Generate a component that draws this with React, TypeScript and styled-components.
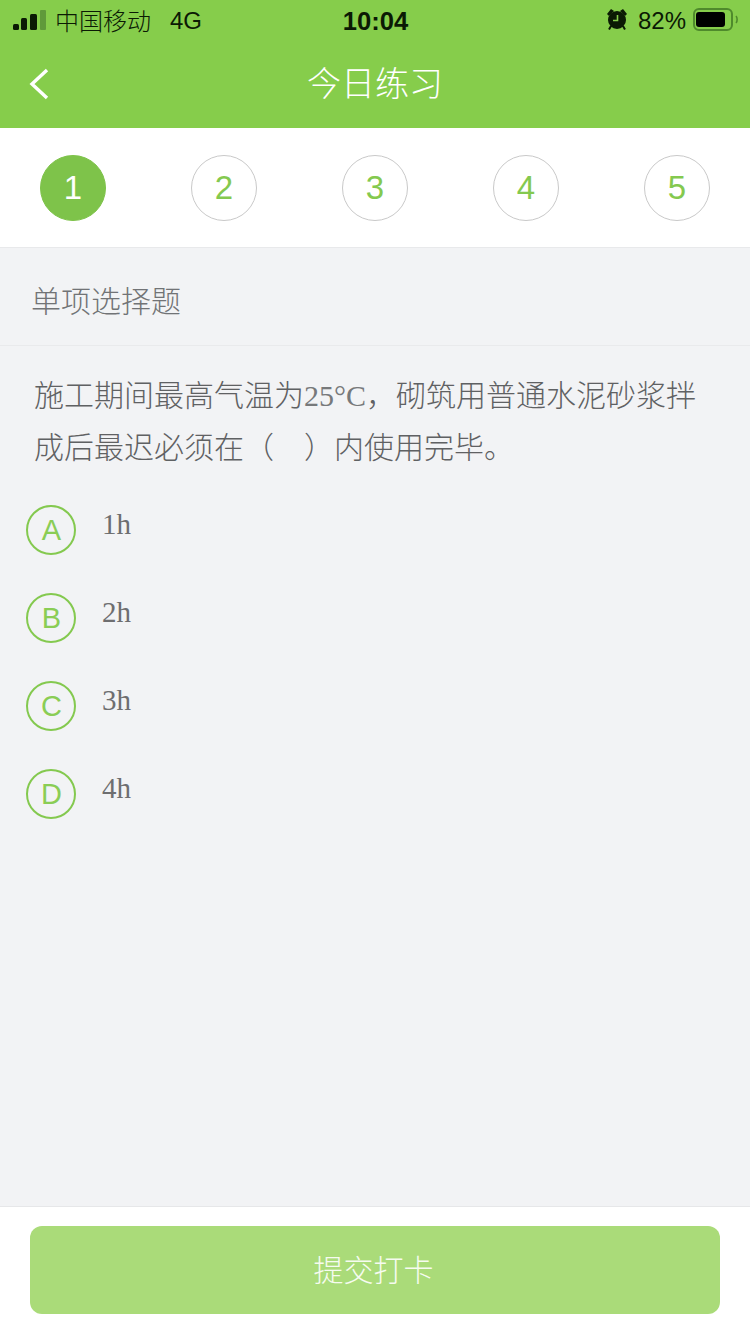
import React from 'react';
import styled, { createGlobalStyle } from 'styled-components';

const GlobalStyle = createGlobalStyle`
  html, body {
    margin: 0;
    padding: 0;
  }
  body {
    font-family: 'Noto Sans CJK SC', 'Liberation Sans', sans-serif;
  }
`;

const Page = styled.div`
  display: flex;
  flex-direction: column;
  width: 750px;
  height: 1334px;
  overflow: hidden;
  background-color: #f2f3f5;
`;

const Header = styled.header`
  display: flex;
  flex-direction: column;
  height: 128px;
  background-color: #86cd4b;
`;

const StatusBar = styled.div`
  display: flex;
  align-items: center;
  justify-content: space-between;
  height: 42px;
  padding: 0 12px 0 13px;
  color: #0b1a04;
  font-size: 24px;
`;

const StatusSide = styled.div`
  display: flex;
  align-items: center;
  width: 300px;
`;

const StatusRight = styled(StatusSide)`
  justify-content: flex-end;
`;

const Carrier = styled.span`
  margin: 0 0 2px 9px;
  line-height: 40px;
  font-weight: 300;
`;

const Network = styled.span`
  margin-left: 19px;
  font-family: 'Liberation Sans', sans-serif;
`;

const Time = styled.span`
  font-family: 'Liberation Sans', sans-serif;
  font-size: 25.6px;
  font-weight: 700;
`;

const Percent = styled.span`
  margin: 0 7px 0 10px;
  font-family: 'Liberation Sans', sans-serif;
`;

const StatusGlyph = styled.svg<{ $lift: number }>`
  margin-bottom: ${(p) => p.$lift}px;
`;

const NavBar = styled.div`
  position: relative;
  display: flex;
  align-items: center;
  justify-content: center;
  height: 86px;
  padding-bottom: 8px;
  box-sizing: border-box;
`;

const BackIcon = styled.svg`
  position: absolute;
  left: 28px;
  top: 26px;
`;

const Title = styled.h1`
  margin: 0;
  color: #fff;
  font-size: 34px;
  font-weight: 300;
`;

const Steps = styled.div`
  display: flex;
  align-items: center;
  justify-content: space-between;
  height: 119px;
  padding: 0 40px;
  background-color: #fff;
  border-bottom: 1px solid #e8e9eb;
`;

const Step = styled.div<{ $active?: boolean }>`
  display: flex;
  align-items: center;
  justify-content: center;
  box-sizing: border-box;
  width: 66px;
  height: 66px;
  border-radius: 50%;
  border: 1px solid ${(p) => (p.$active ? '#7ec34a' : '#c9c9c9')};
  background-color: ${(p) => (p.$active ? '#7ec34a' : '#fff')};
  color: ${(p) => (p.$active ? '#fff' : '#84c94f')};
  font-family: 'Liberation Sans', sans-serif;
  font-size: 33px;
`;

const SectionTitle = styled.div`
  height: 98px;
  padding-left: 31px;
  border-bottom: 1px solid #e9eaec;
  box-sizing: border-box;
  color: #717376;
  font-size: 30px;
  font-weight: 300;
  line-height: 102px;
`;

const Question = styled.p`
  margin: 0;
  padding: 21px 34px 0;
  color: #5f6163;
  font-size: 30px;
  font-weight: 300;
  line-height: 52px;
`;

const Latin = styled.span`
  font-family: 'Liberation Serif', serif;
  line-height: 1;
  color: #77797b;
`;

const Options = styled.div`
  display: flex;
  flex-direction: column;
  gap: 38px;
  padding: 34px 0 0 26px;
`;

const Option = styled.div`
  display: flex;
  align-items: flex-start;
`;

const Badge = styled.div`
  display: flex;
  align-items: center;
  justify-content: center;
  box-sizing: border-box;
  width: 50px;
  height: 50px;
  padding-left: 1px;
  border: 2px solid #84c94f;
  border-radius: 50%;
  color: #8acd55;
  font-family: 'Liberation Sans', sans-serif;
  font-size: 29px;
`;

const OptionText = styled.span`
  margin-left: 26px;
  color: #6e6e70;
  font-family: 'Liberation Serif', serif;
  font-size: 29px;
  line-height: 38px;
`;

const Footer = styled.footer`
  margin-top: auto;
  height: 128px;
  box-sizing: border-box;
  padding: 19px 30px 0;
  background-color: #fff;
  border-top: 1px solid #e6e7e9;
`;

const SubmitButton = styled.button`
  display: block;
  width: 100%;
  height: 88px;
  padding: 0 3px 4px 0;
  border: none;
  border-radius: 12px;
  background-color: #aadb79;
  color: #f6fbf0;
  font-family: inherit;
  font-size: 30px;
  font-weight: 300;
`;

function SignalIcon() {
  return (
    <StatusGlyph $lift={3} width="33" height="20" viewBox="0 0 33 20">
      <rect x="0" y="14" width="6" height="6" rx="1.5" fill="#0b1a04" />
      <rect x="8" y="8" width="6" height="12" rx="1.5" fill="#0b1a04" />
      <rect x="17" y="4" width="7" height="16" rx="1.5" fill="#0b1a04" />
      <rect x="27" y="0" width="6" height="20" rx="1" fill="#5f9a3a" />
    </StatusGlyph>
  );
}

function AlarmIcon() {
  return (
    <StatusGlyph $lift={5} width="22" height="22" viewBox="0 0 22 22">
      <circle cx="11" cy="12" r="9" fill="#0b1a04" />
      <path d="M1 6 L5 1 L8 3 L3 8 Z M21 6 L17 1 L14 3 L19 8 Z" fill="#0b1a04" />
      <path d="M5 18 L3 21.5 M17 18 L19 21.5" stroke="#0b1a04" strokeWidth="2" />
      <path d="M11.5 7 V12.5 H7" fill="none" stroke="#86cd4b" strokeWidth="1.6" />
    </StatusGlyph>
  );
}

function BatteryIcon() {
  return (
    <StatusGlyph $lift={3} width="45" height="23" viewBox="0 0 45 23">
      <rect x="1" y="1" width="38" height="21" rx="5" fill="none" stroke="#4f8a2c" strokeWidth="2" />
      <rect x="3" y="4" width="29" height="15" rx="3" fill="#000" />
      <path d="M43 8 C44.5 9.5 44.5 13.5 43 15" fill="none" stroke="#4f8a2c" strokeWidth="1.6" />
    </StatusGlyph>
  );
}

const stepNumbers = [1, 2, 3, 4, 5];

const options = [
  { key: 'A', text: '1h' },
  { key: 'B', text: '2h' },
  { key: 'C', text: '3h' },
  { key: 'D', text: '4h' },
];

function App() {
  return (
    <Page>
      <GlobalStyle />
      <Header>
        <StatusBar>
          <StatusSide>
            <SignalIcon />
            <Carrier>中国移动</Carrier>
            <Network>4G</Network>
          </StatusSide>
          <Time>10:04</Time>
          <StatusRight>
            <AlarmIcon />
            <Percent>82%</Percent>
            <BatteryIcon />
          </StatusRight>
        </StatusBar>
        <NavBar>
          <BackIcon width="22" height="32" viewBox="0 0 22 32">
            <path d="M19 2 L4 16 L19 30" fill="none" stroke="#fff" strokeWidth="3.4" />
          </BackIcon>
          <Title>今日练习</Title>
        </NavBar>
      </Header>

      <Steps>
        {stepNumbers.map((n) => (
          <Step key={n} $active={n === 1}>
            {n}
          </Step>
        ))}
      </Steps>

      <SectionTitle>单项选择题</SectionTitle>

      <Question>
        施工期间最高气温为<Latin>25°C</Latin>，砌筑用普通水泥砂浆拌成后最迟必须在（　）内使用完毕。
      </Question>

      <Options>
        {options.map((option) => (
          <Option key={option.key}>
            <Badge>{option.key}</Badge>
            <OptionText>{option.text}</OptionText>
          </Option>
        ))}
      </Options>

      <Footer>
        <SubmitButton>提交打卡</SubmitButton>
      </Footer>
    </Page>
  );
}

export default App;
